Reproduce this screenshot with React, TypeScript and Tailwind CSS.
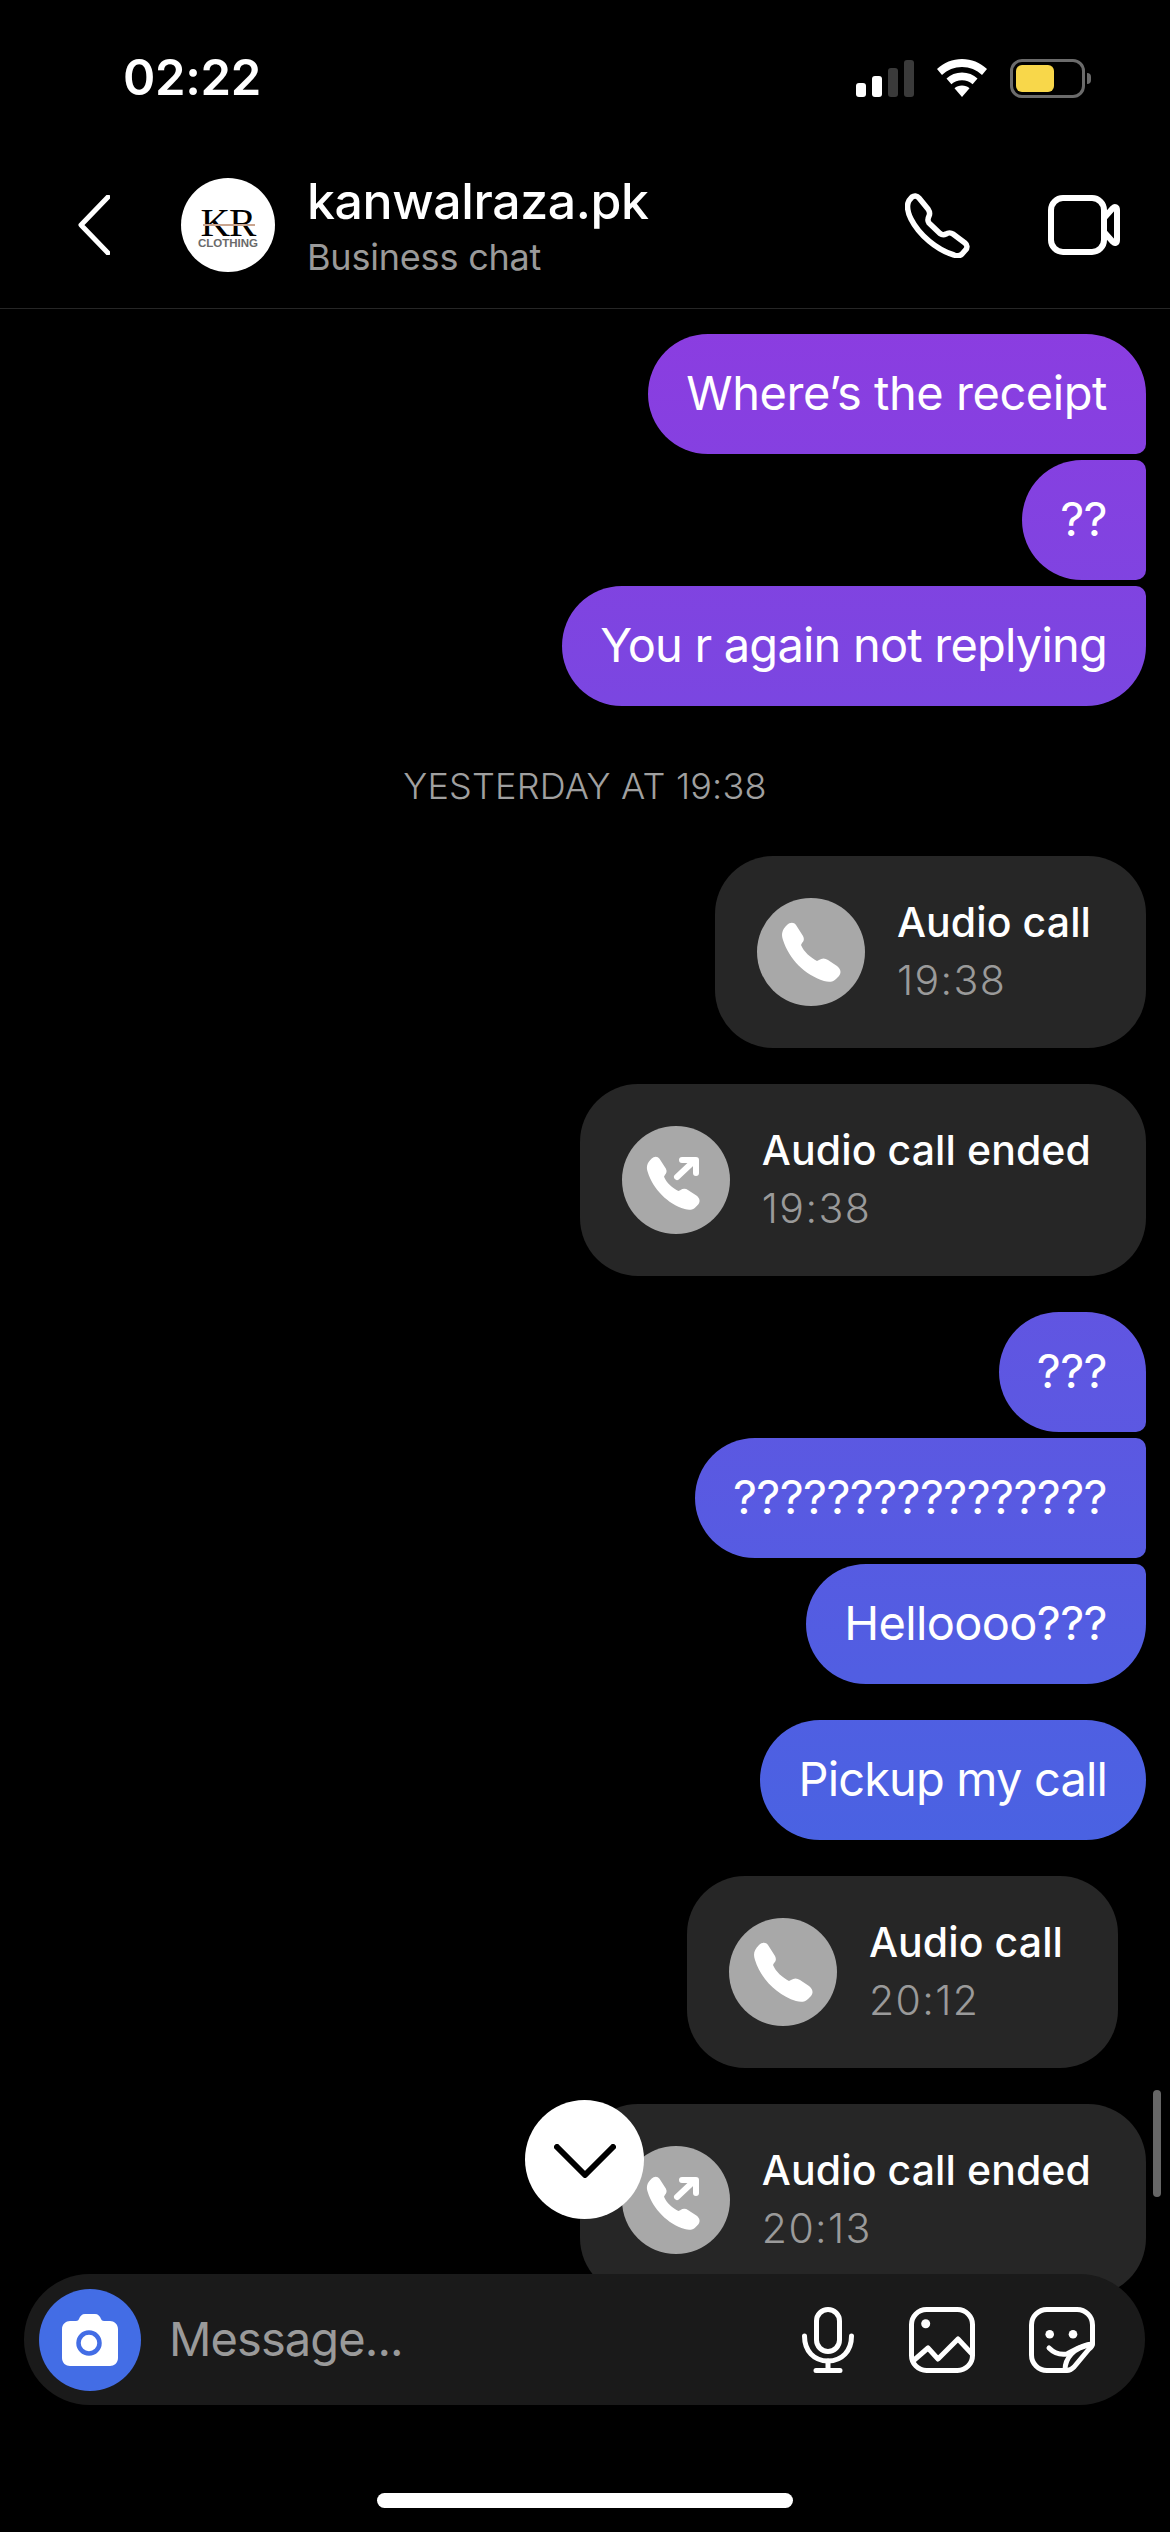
import React from "react";

const bubbleBg = "bg-linear-to-b/srgb from-[#9935e0] to-[#2c73e3] bg-fixed";

function TextBubble({ text, corners, tracking = "tracking-[-0.65px]" }: { text: string; corners: string; tracking?: string }) {
  return (
    <div className={`h-[120px] flex items-center pl-[38px] pr-[39px] pb-[2px] text-white text-[47px] font-normal whitespace-nowrap ${tracking} ${corners} ${bubbleBg}`}>
      {text}
    </div>
  );
}

function PhoneGlyph({ outgoing }: { outgoing?: boolean }) {
  const phone =
    "M6 3C9 0 13 0 15 3L22 14C23.5 17 23 19 21 21L20 23C23 30 29 35 36 39L38 38C41 36 44 36 47 38L56 44C60 47 60.5 51 58 54L55 57C52 60 48 60.5 43 59C24 53 8 37 2 18C0 12 1 8 6 3Z";
  return (
    <svg viewBox="0 0 108 108" className="w-[108px] h-[108px]">
      {outgoing ? (
        <>
          <path d={phone} fill="#fff" transform="translate(24 30) scale(0.9)" />
          <path d="M55 51L72 35M60 34H74V47" fill="none" stroke="#fff" strokeWidth="6" strokeLinecap="round" strokeLinejoin="round" />
        </>
      ) : (
        <path d={phone} fill="#fff" transform="translate(24 24)" />
      )}
    </svg>
  );
}

function CallBubble({ title, time, outgoing, className = "" }: { title: string; time: string; outgoing?: boolean; className?: string }) {
  return (
    <div className={`h-[192px] rounded-[58px] bg-[#262626] flex items-center pl-[42px] pr-[55px] gap-[32px] ${className}`}>
      <div className="w-[108px] h-[108px] rounded-full bg-[#a8a8a8] shrink-0">
        <PhoneGlyph outgoing={outgoing} />
      </div>
      <div className="flex flex-col">
        <span className="text-white text-[41px] leading-[56px] font-medium tracking-[0.1px] whitespace-nowrap -mt-[2px]">{title}</span>
        <span className="text-[#9a9a9a] text-[41px] leading-[56px] font-light tracking-[1.4px] mt-[2px]">{time}</span>
      </div>
    </div>
  );
}

function StatusBar() {
  return (
    <div className="h-[156px] shrink-0 flex items-center justify-between pl-[123px] pr-[79px]">
      <span className="text-white text-[49px] font-semibold tracking-[-0.3px]">02:22</span>
      <div className="flex items-center gap-[23px]">
        <div className="flex items-end gap-[6px] h-[37px]">
          <div className="w-[10px] h-[14px] rounded-[3px] bg-white" />
          <div className="w-[10px] h-[21px] rounded-[3px] bg-white" />
          <div className="w-[10px] h-[29px] rounded-[3px] bg-[#3a3a3a]" />
          <div className="w-[10px] h-[37px] rounded-[3px] bg-[#3a3a3a]" />
        </div>
        <svg viewBox="0 0 50 38" className="w-[50px] h-[38px]" fill="#fff">
          <path d="M25 0C34.5 0 43 3.6 50 10L45 16C39.5 10.8 32.6 8 25 8S10.5 10.8 5 16L0 10C7 3.6 15.5 0 25 0Z" />
          <path d="M25 13.5C31 13.5 36.4 15.7 40.5 19.6L35.6 25.3C32.8 22.7 29.1 21.2 25 21.2S17.2 22.7 14.4 25.3L9.5 19.6C13.6 15.7 19 13.5 25 13.5Z" />
          <path d="M25 26.5C27.9 26.5 30.6 27.5 32.5 29.3L25 38L17.5 29.3C19.4 27.5 22.1 26.5 25 26.5Z" />
        </svg>
        <div className="flex items-center gap-[2px]">
          <div className="w-[75px] h-[39px] rounded-[12px] border-[3px] border-[#6b6b6b] p-[3px]">
            <div className="w-[38px] h-full rounded-[6px] bg-[#f8d74a]" />
          </div>
          <div className="w-[4px] h-[11px] rounded-r-full bg-[#6b6b6b]" />
        </div>
      </div>
    </div>
  );
}

function Avatar() {
  return (
    <div className="relative w-[94px] h-[94px] rounded-full bg-white shrink-0 flex flex-col items-center justify-center font-['Liberation_Serif',serif]">
      <span className="text-black text-[41px] leading-[30px] mt-[6px] tracking-[-1px]">KR</span>
      <span className="text-[#6a6a6a] text-[11.5px] leading-[12px] font-bold font-['Liberation_Sans',sans-serif]">CLOTHING</span>
      <div className="absolute left-[22px] right-[20px] top-[46px] h-[2px] bg-[#c9a58f]" />
    </div>
  );
}

function Header() {
  return (
    <header className="h-[153px] shrink-0 border-b border-[#262626] flex items-center pb-[14px] pl-[78px] pr-[50px]">
      <svg viewBox="0 0 32 60" className="w-[32px] h-[60px]" fill="none" stroke="#fff" strokeWidth="5" strokeLinecap="round" strokeLinejoin="round">
        <path d="M30 2L3 30L30 58" />
      </svg>
      <div className="ml-[71px]">
        <Avatar />
      </div>
      <div className="ml-[32px] flex flex-col">
        <span className="text-white text-[50px] leading-[60px] font-medium tracking-[-0.4px]">kanwalraza.pk</span>
        <span className="text-[#9a9a9a] text-[36px] leading-[46px] font-normal tracking-[-0.2px] mt-[3px]">Business chat</span>
      </div>
      <svg viewBox="0 0 65 65" className="w-[65px] h-[65px] ml-auto" fill="none" stroke="#fff" strokeWidth="5.5" strokeLinejoin="round">
        <path d="M7 4C9 2.5 12 2.5 14 5L23 16C25 19 25 21 24 23C22.5 26 22.5 28 24 30L35 40.5C37 42 39 42 41 41C43 39.5 46 39.5 48 41L60 50C62.5 52 62.5 55 60.5 57L57 61C55 63 52 63 49 62C32 57 14 42 6 26C3 20 2 14 3 10C3.5 8 5 6 7 4Z" />
      </svg>
      <svg viewBox="0 0 72 60" className="w-[72px] h-[60px] ml-[78px]" fill="none" stroke="#fff" strokeWidth="6" strokeLinejoin="round">
        <rect x="3" y="3" width="53" height="54" rx="12" />
        <path d="M56 23L65 13C67 11 69 12 69 15V45C69 48 67 49 65 47L56 37" />
      </svg>
    </header>
  );
}

function InputBar() {
  return (
    <div className="h-[131px] rounded-[66px] bg-[#1a1a1a] flex items-center pl-[15px] pr-[50px]">
      <div className="w-[102px] h-[102px] rounded-full bg-[#436de5] flex items-center justify-center shrink-0">
        <svg viewBox="0 0 56 52" className="w-[56px] h-[52px]">
          <path d="M17 5C18 2 20 0 23 0H33C36 0 38 2 39 5C40 7 41 7 44 7H48C52 7 56 10 56 15V44C56 49 52 52 48 52H8C4 52 0 49 0 44V15C0 10 4 7 8 7H12C15 7 16 7 17 5Z" fill="#fff" />
          <circle cx="27" cy="29" r="10.5" fill="none" stroke="#436de5" strokeWidth="4.5" />
        </svg>
      </div>
      <span className="ml-[28px] text-[#9a9a9a] text-[47px] font-normal tracking-[-0.9px]">Message...</span>
      <svg viewBox="0 0 52 66" className="w-[52px] h-[66px] ml-auto" fill="none" stroke="#fff" strokeWidth="5" strokeLinecap="round">
        <rect x="14.5" y="2.5" width="23" height="42" rx="11.5" />
        <path d="M2.5 29C2.5 44 12 54 26 54C40 54 49.5 44 49.5 29" />
        <path d="M26 54V63M14 63.5H38" />
      </svg>
      <svg viewBox="0 0 66 66" className="w-[66px] h-[66px] ml-[55px]" fill="none" stroke="#fff" strokeWidth="5" strokeLinejoin="round">
        <rect x="2.5" y="2.5" width="61" height="61" rx="15" />
        <circle cx="16.7" cy="16.7" r="4.5" fill="#fff" stroke="none" />
        <path d="M4 54L19 41L29 52L49 32L63 47" />
      </svg>
      <svg viewBox="0 0 66 66" className="w-[66px] h-[66px] ml-[54px]" fill="none" stroke="#fff" strokeWidth="5" strokeLinejoin="round" strokeLinecap="round">
        <path d="M63.5 37V18A15.5 15.5 0 0 0 48 2.5H18A15.5 15.5 0 0 0 2.5 18V48A15.5 15.5 0 0 0 18 63.5H38C41 63.5 43 62 45 60L60 42C62.5 40 63.5 39 63.5 37Z" />
        <circle cx="20.7" cy="27.3" r="4.3" fill="#fff" stroke="none" />
        <circle cx="44" cy="27.3" r="4.3" fill="#fff" stroke="none" />
        <path d="M20 41C25 46 32 48 38 47C44 44 52 38 63 37" />
        <path d="M36 63C36 52 44 40 62 38" />
      </svg>
    </div>
  );
}

export default function App() {
  return (
    <div className="relative w-[1170px] h-[2532px] bg-black overflow-hidden flex flex-col font-['Inter',sans-serif]">
      <StatusBar />
      <Header />

      <main className="flex-1 flex flex-col items-end gap-[36px] pt-[25px] pr-[24px]">
        <div className="flex flex-col items-end gap-[6px]">
          <TextBubble text="Where’s the receipt" corners="rounded-[60px] rounded-br-[10px]" tracking="tracking-[-0.45px]" />
          <TextBubble text="??" corners="rounded-l-[60px] rounded-r-[10px]" />
          <TextBubble text="You r again not replying" corners="rounded-[60px] rounded-tr-[10px]" tracking="tracking-[-0.8px]" />
        </div>

        <div className="self-stretch pl-[24px] mt-[24px] mb-[14px] h-[40px] flex items-center justify-center text-[#a0a0a0] text-[36px] font-light tracking-[0.2px]">
          YESTERDAY AT 19:38
        </div>

        <CallBubble title="Audio call" time="19:38" />
        <CallBubble title="Audio call ended" time="19:38" outgoing />

        <div className="flex flex-col items-end gap-[6px]">
          <TextBubble text="???" corners="rounded-[60px] rounded-br-[10px]" />
          <TextBubble text="????????????????" corners="rounded-l-[60px] rounded-r-[10px]" />
          <TextBubble text="Helloooo???" corners="rounded-[60px] rounded-tr-[10px]" />
        </div>

        <TextBubble text="Pickup my call" corners="rounded-[60px]" tracking="tracking-[-0.85px]" />

        <CallBubble title="Audio call" time="20:12" className="mr-[28px]" />
        <CallBubble title="Audio call ended" time="20:13" outgoing />
      </main>

      {/* scroll indicator + jump to latest sit over the list */}
      <div className="absolute left-[1153px] top-[2090px] w-[8px] h-[107px] rounded-full bg-[#666]" />
      <div className="absolute left-[525px] top-[2100px] w-[119px] h-[119px] rounded-full bg-white flex items-center justify-center">
        <svg viewBox="0 0 62 34" className="w-[62px] h-[34px] mt-[2px]" fill="none" stroke="#000" strokeWidth="6" strokeLinecap="round" strokeLinejoin="round">
          <path d="M3 3L31 31L59 3" />
        </svg>
      </div>

      <footer className="absolute inset-x-0 bottom-0 pl-[24px] pr-[25px] pb-[24px] flex flex-col">
        <InputBar />
        <div className="mt-[88px] mx-auto w-[416px] h-[15px] rounded-full bg-white" />
      </footer>
    </div>
  );
}
